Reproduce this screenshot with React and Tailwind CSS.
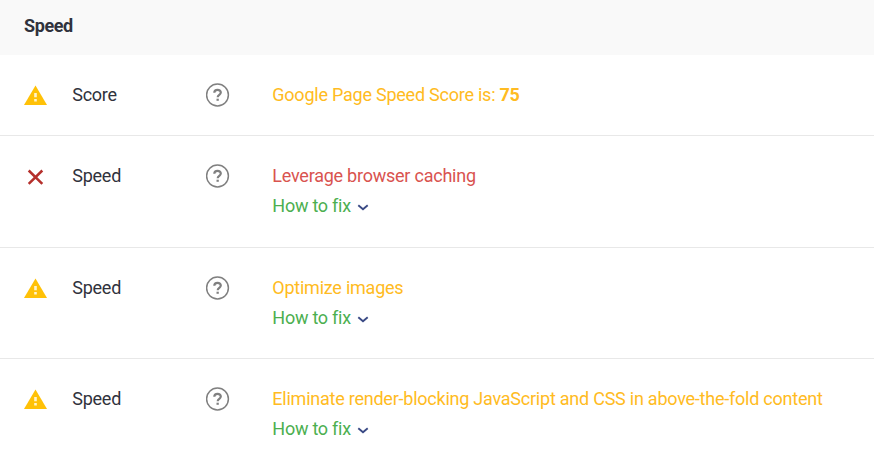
const rows = [
  { status: 'warning', label: 'Score', message: 'Google Page Speed Score is:', value: '75', height: 'h-[81px]' },
  { status: 'error', label: 'Speed', message: 'Leverage browser caching', fix: true, height: 'h-[112px]' },
  { status: 'warning', label: 'Speed', message: 'Optimize images', fix: true, height: 'h-[111px]' },
  {
    status: 'warning',
    label: 'Speed',
    message: 'Eliminate render-blocking JavaScript and CSS in above-the-fold content',
    fix: true,
    height: 'h-[109px]',
  },
];

const StatusIcon = ({ status }) => {
  if (status === 'error') {
    return (
      <svg className="mt-[33px] ml-[3px] h-4 w-[17px]" viewBox="0 0 17 16" fill="none">
        <path d="M1.7 1.5l13.6 13.4M15.3 1.5L1.7 14.9" stroke="#b5302c" strokeWidth="2.5" />
      </svg>
    );
  }

  return (
    <svg className="mt-[30px] h-5 w-[23px]" viewBox="0 0 23 20">
      <path d="M0 20h23L11.5 0.4 0 20z" fill="#ffc107" />
      <path d="M10.2 8h2.6v4.2h-2.6zM10.2 14h2.6v2.5h-2.6z" fill="#fff4cf" />
    </svg>
  );
};

const HelpIcon = () => (
  <svg className="mt-[28px] size-6" viewBox="0 0 24 24" fill="none">
    <circle cx="11.5" cy="12" r="10.9" stroke="#808080" strokeWidth="1.5" />
    <path d="M8.3 9.8c0-1.8 1.4-3 3.3-3s3.2 1.1 3.2 2.8c0 2.2-3.1 2.4-3.1 4.7" stroke="#808080" strokeWidth="2.2" />
    <path d="M10.5 15.7h2.3v2.1h-2.3z" fill="#808080" />
  </svg>
);

const Row = ({ row }) => (
  <div className={`flex pl-6 ${row.height} border-b border-[#e8e8e8] last:border-b-0`}>
    <div className="w-12 shrink-0">
      <StatusIcon status={row.status} />
    </div>
    <div className="w-[134px] shrink-0 pt-[25px] pl-[0.2px] text-[#30323c]">{row.label}</div>
    <div className="w-[66.3px] shrink-0">
      <HelpIcon />
    </div>
    <div className="pt-[25px] whitespace-nowrap">
      <p className={row.status === 'error' ? 'text-[#d9534f]' : 'text-[#ffbb22]'}>
        {row.message} {row.value && <span className="font-bold">{row.value}</span>}
      </p>
      {row.fix && (
        <button className="flex items-center tracking-[-0.25px] text-[#4caf50]">
          How to fix
          <svg className="mt-[2px] ml-[6px] h-[7px] w-3" viewBox="0 0 12 7" fill="none">
            <path d="M1.3 1.3L6 5.2l4.7-3.9" stroke="#3a4a85" strokeWidth="1.9" />
          </svg>
        </button>
      )}
    </div>
  </div>
);

const App = () => {
  return (
    <div className="h-[468px] w-full overflow-hidden bg-white font-['Roboto',sans-serif] text-[18px] leading-[30px] tracking-[-0.235px]">
      <h2 className="h-[55px] bg-[#f9f9f9] pt-[11px] pl-6 font-bold tracking-[-0.4px] text-[#30323c]">Speed</h2>
      {rows.map((row, index) => (
        <Row key={index} row={row} />
      ))}
    </div>
  );
};

export default App;
